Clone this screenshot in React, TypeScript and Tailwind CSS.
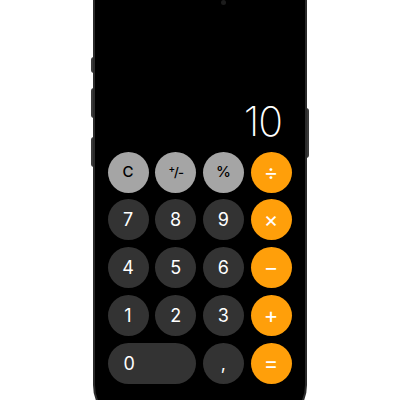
import React from 'react'

type Key = {
  label: string
  kind: 'fn' | 'num' | 'op'
  wide?: boolean
}

const keys: Key[] = [
  { label: 'C', kind: 'fn' },
  { label: '+/-', kind: 'fn' },
  { label: '%', kind: 'fn' },
  { label: '÷', kind: 'op' },
  { label: '7', kind: 'num' },
  { label: '8', kind: 'num' },
  { label: '9', kind: 'num' },
  { label: '×', kind: 'op' },
  { label: '4', kind: 'num' },
  { label: '5', kind: 'num' },
  { label: '6', kind: 'num' },
  { label: '−', kind: 'op' },
  { label: '1', kind: 'num' },
  { label: '2', kind: 'num' },
  { label: '3', kind: 'num' },
  { label: '+', kind: 'op' },
  { label: '0', kind: 'num', wide: true },
  { label: ',', kind: 'num' },
  { label: '=', kind: 'op' },
]

const kindStyles: Record<Key['kind'], string> = {
  fn: 'bg-[#a5a5a5] text-black text-[15px] font-medium',
  num: 'bg-[#333333] text-white text-[18px]',
  op: 'bg-[#ff9f0a] text-white text-[22px]',
}

function CalcKey({ k }: { k: Key }) {
  if (k.label === '+/-') {
    return (
      <button className="h-[41px] w-[41px] rounded-full bg-[#a5a5a5] text-black flex items-center justify-center">
        <span className="text-[13px] font-medium leading-none tracking-[-1px]">
          <sup className="text-[10px]">+</sup>/-
        </span>
      </button>
    )
  }
  return (
    <button
      className={`h-[41px] rounded-full flex items-center ${
        k.wide ? 'col-span-2 justify-start pl-[16px]' : 'w-[41px] justify-center'
      } ${kindStyles[k.kind]}`}
    >
      {k.label}
    </button>
  )
}

export default function App() {
  return (
    <div
      className="w-[400px] h-[400px] bg-white overflow-hidden flex justify-center"
      style={{ fontFamily: 'Inter, "Liberation Sans", sans-serif' }}
    >
      <div className="relative mt-[-40px] w-[214px] h-[465px] shrink-0">
        {/* side buttons */}
        <div className="absolute left-[-2px] top-[97px] w-[3px] h-[16px] rounded-l bg-[#3a3a3a]" />
        <div className="absolute left-[-2px] top-[128px] w-[3px] h-[30px] rounded-l bg-[#3a3a3a]" />
        <div className="absolute left-[-2px] top-[177px] w-[3px] h-[30px] rounded-l bg-[#3a3a3a]" />
        <div className="absolute right-[-2px] top-[148px] w-[3px] h-[50px] rounded-r bg-[#3a3a3a]" />

        <div className="relative h-full w-full rounded-[40px] bg-black border-[2px] border-[#2b2b2b] flex flex-col justify-end pb-[39.5px]">
          <div className="absolute left-[126px] top-[38px] w-[5px] h-[5px] rounded-full bg-[#1c1c1c]" />

          <div className="flex justify-end pr-[23px] pb-[10px]">
            <span className="text-white text-[41px] font-extralight leading-none tracking-[-1px]">10</span>
          </div>

          <div className="grid grid-cols-[repeat(4,41px)] gap-x-[6.7px] gap-y-[6.75px] pl-[12.5px]">
            {keys.map(k => (
              <CalcKey key={k.label} k={k} />
            ))}
          </div>
        </div>
      </div>
    </div>
  )
}
